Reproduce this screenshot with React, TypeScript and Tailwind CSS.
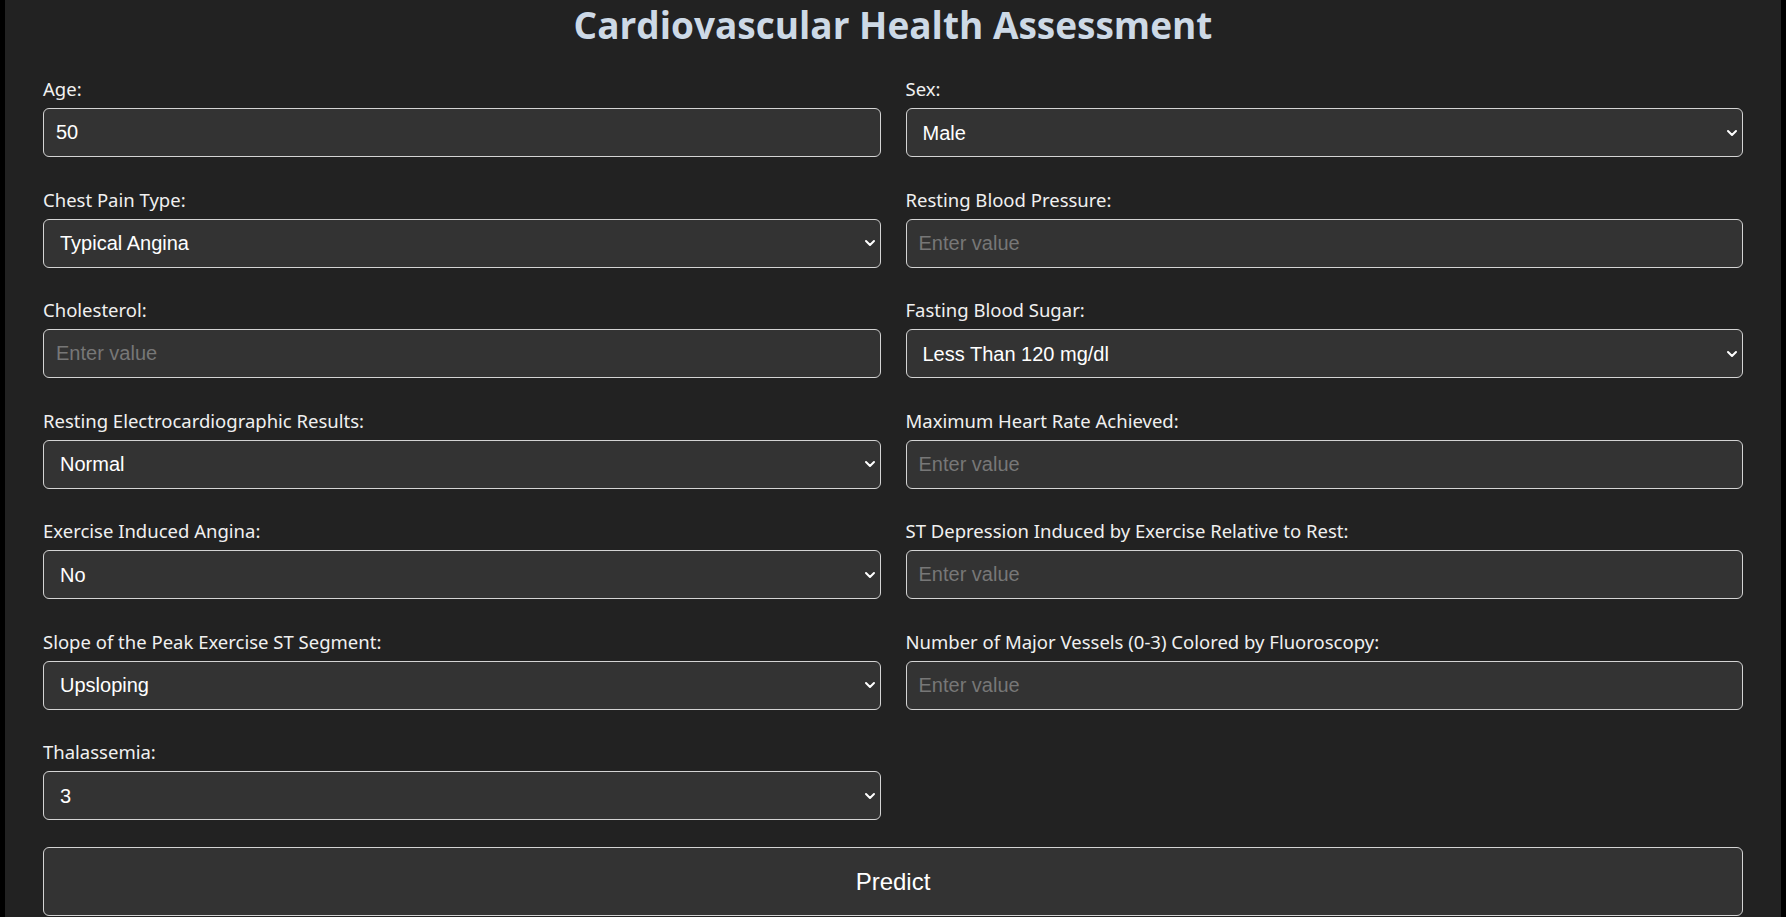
import { useState } from 'react';

type Field =
    | { kind: 'input'; label: string; value?: string }
    | { kind: 'select'; label: string; options: string[] };

const fields: Field[] = [
    { kind: 'input', label: 'Age:', value: '50' },
    { kind: 'select', label: 'Sex:', options: ['Male', 'Female'] },
    { kind: 'select', label: 'Chest Pain Type:', options: ['Typical Angina', 'Atypical Angina', 'Non-anginal Pain', 'Asymptomatic'] },
    { kind: 'input', label: 'Resting Blood Pressure:' },
    { kind: 'input', label: 'Cholesterol:' },
    { kind: 'select', label: 'Fasting Blood Sugar:', options: ['Less Than 120 mg/dl', 'Greater Than 120 mg/dl'] },
    { kind: 'select', label: 'Resting Electrocardiographic Results:', options: ['Normal', 'ST-T Wave Abnormality', 'Left Ventricular Hypertrophy'] },
    { kind: 'input', label: 'Maximum Heart Rate Achieved:' },
    { kind: 'select', label: 'Exercise Induced Angina:', options: ['No', 'Yes'] },
    { kind: 'input', label: 'ST Depression Induced by Exercise Relative to Rest:' },
    { kind: 'select', label: 'Slope of the Peak Exercise ST Segment:', options: ['Upsloping', 'Flat', 'Downsloping'] },
    { kind: 'input', label: 'Number of Major Vessels (0-3) Colored by Fluoroscopy:' },
    { kind: 'select', label: 'Thalassemia:', options: ['3', '6', '7'] },
];

const boxClass =
    "w-full h-[49px] bg-[#333333] border border-[#d4d4d4] rounded-[6px] text-[20px] text-white font-['Liberation_Sans',Arial,sans-serif] outline-none";

function Chevron() {
    return (
        <svg className="absolute right-[5px] top-1/2 -translate-y-1/2 pointer-events-none" width="12" height="8" viewBox="0 0 12 8" fill="none">
            <path d="M2 2l4 4 4-4" stroke="#ffffff" strokeWidth="2" strokeLinecap="round" strokeLinejoin="round" />
        </svg>
    );
}

function FormField({ field }: { field: Field }) {
    const [value, setValue] = useState(field.kind === 'input' ? field.value ?? '' : field.options[0]);

    return (
        <div className="flex flex-col">
            <label className="block text-[18.5px] leading-[22px] mb-[8px] text-[#f0f0f0]">{field.label}</label>
            {field.kind === 'input' ? (
                <input
                    type="text"
                    value={value}
                    onChange={(e) => setValue(e.target.value)}
                    placeholder="Enter value"
                    className={`${boxClass} px-[12px] placeholder:text-[#777777]`}
                />
            ) : (
                <div className="relative">
                    <select
                        value={value}
                        onChange={(e) => setValue(e.target.value)}
                        className={`${boxClass} appearance-none pl-[16px] pr-[28px]`}
                    >
                        {field.options.map((opt) => (
                            <option key={opt} value={opt}>
                                {opt}
                            </option>
                        ))}
                    </select>
                    <Chevron />
                </div>
            )}
        </div>
    );
}

export default function App() {
    return (
        <div className="min-h-screen bg-black px-[5px] font-['Noto_Sans','Open_Sans',sans-serif]">
            <div className="min-h-screen bg-[#222222] pl-[38px] pr-[38px]">
                <h1 className="text-center text-[37px] leading-[43px] pt-[3px] font-bold text-[#cdd9e6] font-['Open_Sans',sans-serif]">
                    Cardiovascular Health Assessment
                </h1>
                <form className="mt-[32px]" onSubmit={(e) => e.preventDefault()}>
                    <div className="grid grid-cols-2 gap-x-[25px] gap-y-[31.5px]">
                        {fields.map((f) => (
                            <FormField key={f.label} field={f} />
                        ))}
                    </div>
                    <button
                        type="submit"
                        className="mt-[27px] w-full h-[69px] bg-[#333333] border border-[#d4d4d4] rounded-[6px] text-[24px] text-white font-['Liberation_Sans',Arial,sans-serif]"
                    >
                        Predict
                    </button>
                </form>
            </div>
        </div>
    );
}
